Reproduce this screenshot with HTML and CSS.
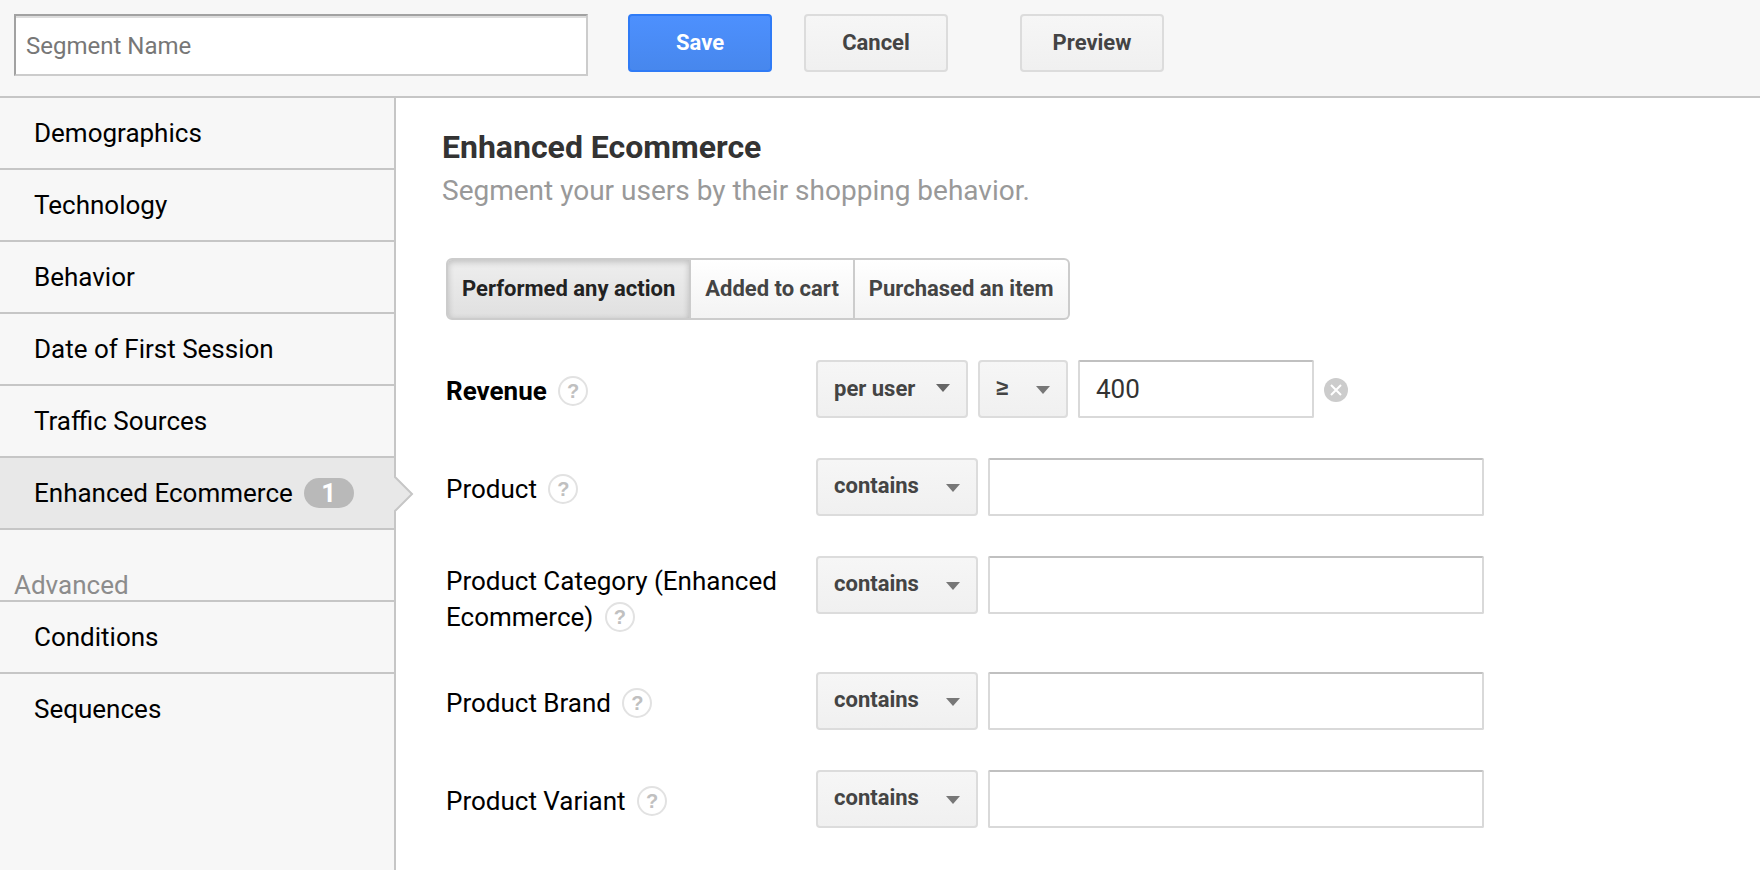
FILE: index.html
```html
<!DOCTYPE html>
<html lang="en">
<head>
<meta charset="utf-8">
<title>Segment Builder</title>
<link rel="stylesheet" href="styles.css">
</head>
<body>
<form class="builder">
  <header class="toolbar">
    <input class="segment-name" type="text" placeholder="Segment Name" aria-label="Segment Name">
    <button class="btn btn-primary" type="button">Save</button>
    <button class="btn" type="button">Cancel</button>
    <button class="btn btn-preview" type="button">Preview</button>
  </header>
  <div class="body">
    <nav class="sidebar">
      <a class="nav-item" href="#">Demographics</a>
      <a class="nav-item" href="#">Technology</a>
      <a class="nav-item" href="#">Behavior</a>
      <a class="nav-item" href="#">Date of First Session</a>
      <a class="nav-item" href="#">Traffic Sources</a>
      <a class="nav-item selected" href="#">Enhanced Ecommerce<span class="badge">1</span>
        <svg class="pointer" width="20" height="38" viewBox="0 0 20 38" aria-hidden="true"><path d="M0 1v36h1L19 19 1 1z" fill="#e8e8e8"/><path d="M0 1L18 19L0 37" fill="none" stroke="#c6c6c6" stroke-width="2"/></svg>
      </a>
      <h2 class="nav-heading">Advanced</h2>
      <a class="nav-item" href="#">Conditions</a>
      <a class="nav-item last" href="#">Sequences</a>
    </nav>
    <main class="content">
      <h1 class="title">Enhanced Ecommerce</h1>
      <p class="subtitle">Segment your users by their shopping behavior.</p>
      <div class="tabs">
        <button class="tab active" type="button">Performed any action</button>
        <button class="tab" type="button">Added to cart</button>
        <button class="tab" type="button">Purchased an item</button>
      </div>
      <div class="row">
        <div class="label strong"><label for="revenue">Revenue</label> <button class="help" type="button" aria-label="Help">?</button></div>
        <div class="fields">
          <span class="picker picker-scope"><select aria-label="Revenue scope"><option>per user</option></select></span>
          <span class="picker picker-operator"><select aria-label="Revenue operator"><option>≥</option></select></span>
          <input class="value value-short" id="revenue" type="text" value="400">
          <button class="clear" type="button" aria-label="Clear"><svg width="24" height="24" viewBox="0 0 24 24"><circle cx="12" cy="12" r="12" fill="#ccc"/><path d="M7 7l10 10M17 7L7 17" stroke="#fff" stroke-width="2"/></svg></button>
        </div>
      </div>
      <div class="row">
        <div class="label"><label for="product">Product</label> <button class="help" type="button" aria-label="Help">?</button></div>
        <div class="fields">
          <span class="picker picker-match"><select aria-label="Product match"><option>contains</option></select></span>
          <input class="value" id="product" type="text">
        </div>
      </div>
      <div class="row">
        <div class="label wrapped"><label for="category">Product Category (Enhanced Ecommerce)</label> <button class="help" type="button" aria-label="Help">?</button></div>
        <div class="fields">
          <span class="picker picker-match"><select aria-label="Product category match"><option>contains</option></select></span>
          <input class="value" id="category" type="text">
        </div>
      </div>
      <div class="row">
        <div class="label"><label for="brand">Product Brand</label> <button class="help" type="button" aria-label="Help">?</button></div>
        <div class="fields">
          <span class="picker picker-match"><select aria-label="Product brand match"><option>contains</option></select></span>
          <input class="value" id="brand" type="text">
        </div>
      </div>
      <div class="row">
        <div class="label"><label for="variant">Product Variant</label> <button class="help" type="button" aria-label="Help">?</button></div>
        <div class="fields">
          <span class="picker picker-match"><select aria-label="Product variant match"><option>contains</option></select></span>
          <input class="value" id="variant" type="text">
        </div>
      </div>
    </main>
  </div>
</form>
</body>
</html>
```
FILE: styles.css
```css
* { box-sizing: border-box; }
body {
  margin: 0;
  background: #fff;
  color: #000;
  font: 26px/36px Roboto, "Liberation Sans", sans-serif;
}
button, input, select { font-family: inherit; margin: 0; }
.builder {
  display: flex;
  flex-direction: column;
  min-height: 100vh;
}
.toolbar {
  display: flex;
  align-items: flex-start;
  padding: 14px 14px 20px;
  background: #f7f7f7;
  border-bottom: 2px solid #c6c6c6;
}
.segment-name {
  width: 574px;
  height: 62px;
  margin-right: 40px;
  padding: 2px 10px 0;
  border: 2px solid #ccc;
  border-top-color: #a2a2a2;
  border-left-color: #a2a2a2;
  box-shadow: inset 0 2px 0 #ddd;
  background: #fff;
  font-size: 24px;
}
.segment-name::placeholder { color: #777; }
.btn {
  width: 144px;
  height: 58px;
  margin-right: 32px;
  padding: 0 0 2px;
  border: 2px solid #dcdcdc;
  border-radius: 4px;
  background: linear-gradient(#f6f6f6, #f0f0f0);
  color: #444;
  font-size: 22px;
  font-weight: 700;
}
.btn-primary {
  border-color: #2f7bf6;
  background: linear-gradient(#4d90fe, #4787ed);
  color: #fff;
}
.btn-preview { margin-left: 40px; }
.body {
  display: flex;
  flex: 1;
}
.sidebar {
  flex: none;
  width: 396px;
  border-right: 2px solid #c6c6c6;
  background: #f7f7f7;
}
.nav-item {
  display: flex;
  align-items: center;
  height: 72px;
  padding-left: 34px;
  border-bottom: 2px solid #c6c6c6;
  color: #000;
  text-decoration: none;
}
.nav-item.last { border-bottom-color: transparent; }
.nav-item.selected {
  position: relative;
  background: #e8e8e8;
}
.badge {
  width: 50px;
  margin-left: 11px;
  border-radius: 15px;
  background: #b9b9b9;
  color: #fff;
  font-size: 26px;
  font-weight: 700;
  line-height: 30px;
  text-align: center;
}
.pointer {
  position: absolute;
  top: 17px;
  right: -20px;
}
.nav-heading {
  margin: 0;
  padding: 40px 14px 0;
  border-bottom: 2px solid #c6c6c6;
  color: #8c8c8c;
  font-size: 26px;
  font-weight: 400;
  line-height: 30px;
}
.content {
  flex: 1;
  padding: 30px 46px 0;
}
.title {
  margin: 0;
  color: #333;
  font-size: 32px;
  line-height: 38px;
}
.subtitle {
  margin: 0 0 42px;
  color: #999;
  font-size: 28px;
  line-height: 50px;
}
.tabs {
  display: flex;
  width: max-content;
  margin: 0 0 40px 4px;
}
.tab {
  height: 62px;
  padding: 0 14px 2px;
  border: 2px solid #ccc;
  border-left-width: 0;
  background: linear-gradient(#fff, #f3f3f3);
  color: #444;
  font-size: 22px;
  font-weight: 700;
}
.tab:first-child {
  border-left-width: 2px;
  border-radius: 6px 0 0 6px;
}
.tab:last-child { border-radius: 0 6px 6px 0; }
.tab.active {
  background: linear-gradient(#eee, #e0e0e0);
  box-shadow: inset 0 2px 6px rgba(0, 0, 0, 0.2);
  color: #222;
}
.row {
  display: flex;
  align-items: flex-start;
  margin-left: 4px;
}
.label {
  flex: none;
  width: 370px;
  padding: 13px 20px 49px 0;
}
.label.wrapped { padding: 7px 20px 37px 0; }
.label.strong { font-weight: 700; }
.help {
  width: 30px;
  height: 30px;
  margin: 3px 0 0 5px;
  padding: 0;
  border: 2px solid #e2e2e2;
  border-radius: 50%;
  background: none;
  color: #c0c0c0;
  font: 700 20px/26px "Liberation Sans", sans-serif;
  vertical-align: top;
}
.fields {
  display: flex;
  flex: 1;
  align-items: center;
  gap: 10px;
}
.picker {
  position: relative;
  flex: none;
  height: 58px;
}
.picker select {
  width: 100%;
  height: 58px;
  padding: 0 18px 4px 16px;
  border: 2px solid #dcdcdc;
  border-radius: 4px;
  appearance: none;
  background: linear-gradient(#f6f6f6, #f0f0f0);
  color: #444;
  font-size: 22px;
  font-weight: 700;
}
.picker::after {
  content: "";
  position: absolute;
  top: 26px;
  right: 18px;
  border: 7px solid transparent;
  border-top: 8px solid #777;
  border-bottom: 0;
  pointer-events: none;
}
.picker-scope { width: 152px; }
.picker-operator { width: 90px; }
.picker-operator select { font-family: "Liberation Sans", sans-serif; }
.picker-match { width: 162px; }
.picker-scope select { padding-bottom: 2px; }
.picker-scope::after { top: 24px; border-top-color: #666; }
.value {
  flex: 0 1 496px;
  min-width: 0;
  height: 58px;
  padding: 0 16px;
  border: 2px solid #d9d9d9;
  border-top-color: #c0c0c0;
  border-radius: 2px;
  background: #fff;
  color: #333;
  font-size: 26px;
}
.value-short { flex-basis: 236px; }
.clear {
  display: flex;
  padding: 2px 0 0;
  border: 0;
  background: none;
}
```
